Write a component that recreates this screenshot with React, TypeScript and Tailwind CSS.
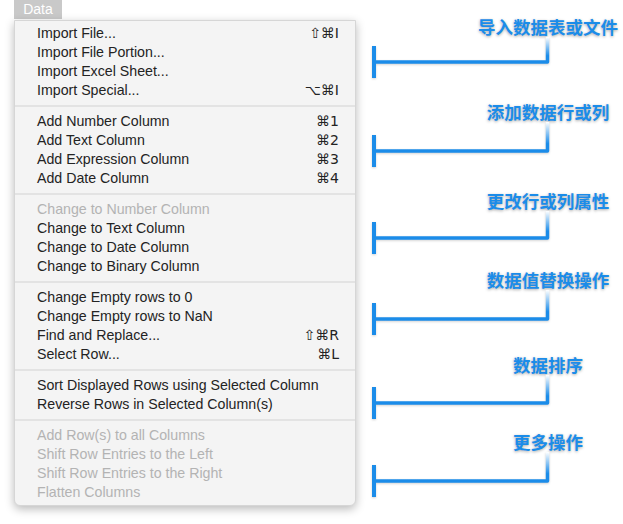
import React from "react";

type Item = { label: string; key?: string; off?: boolean };

const groups: Item[][] = [
  [
    { label: "Import File...", key: "⇧⌘I" },
    { label: "Import File Portion..." },
    { label: "Import Excel Sheet..." },
    { label: "Import Special...", key: "⌥⌘I" },
  ],
  [
    { label: "Add Number Column", key: "⌘1" },
    { label: "Add Text Column", key: "⌘2" },
    { label: "Add Expression Column", key: "⌘3" },
    { label: "Add Date Column", key: "⌘4" },
  ],
  [
    { label: "Change to Number Column", off: true },
    { label: "Change to Text Column" },
    { label: "Change to Date Column" },
    { label: "Change to Binary Column" },
  ],
  [
    { label: "Change Empty rows to 0" },
    { label: "Change Empty rows to NaN" },
    { label: "Find and Replace...", key: "⇧⌘R" },
    { label: "Select Row...", key: "⌘L" },
  ],
  [
    { label: "Sort Displayed Rows using Selected Column" },
    { label: "Reverse Rows in Selected Column(s)" },
  ],
  [
    { label: "Add Row(s) to all Columns", off: true },
    { label: "Shift Row Entries to the Left", off: true },
    { label: "Shift Row Entries to the Right", off: true },
    { label: "Flatten Columns", off: true },
  ],
];

// label text, block height, offset of the horizontal line inside the bracket svg
const notes = [
  { text: "导入数据表或文件", h: "h-[85px]", y: 25 },
  { text: "添加数据行或列", h: "h-[89px]", y: 29 },
  { text: "更改行或列属性", h: "h-[79px]", y: 27 },
  { text: "数据值替换操作", h: "h-[85px]", y: 29 },
  { text: "数据排序", h: "h-[77px]", y: 28 },
  { text: "更多操作", h: "h-[70px]", y: 29 },
];

const BLUE = "#1b8ce9";

function Bracket({ y, id }: { y: number; id: string }) {
  return (
    <svg width="182" height={y + 18} className="block drop-shadow-[0_1px_1px_rgba(0,0,0,0.18)]">
      <defs>
        <linearGradient id={id} gradientUnits="userSpaceOnUse" x1="0" y1="0" x2="0" y2={y}>
          <stop offset="0" stopColor="#ffffff" />
          <stop offset="0.75" stopColor={BLUE} />
        </linearGradient>
      </defs>
      <rect x="0" y={y - 16} width="4" height="32" fill={BLUE} />
      <path
        d={`M 2 ${y} H 175.5 V 0`}
        fill="none"
        stroke={`url(#${id})`}
        strokeWidth="3.5"
        strokeLinejoin="round"
      />
    </svg>
  );
}

export default function App() {
  return (
    <div className="w-[623px] h-[524px] bg-white flex font-['Liberation_Sans',Arial,sans-serif] overflow-hidden">
      {/* menu */}
      <div className="pl-[14px] flex flex-col">
        <div className="w-[48px] h-[19px] bg-[#c9c9c9] text-white text-[14px] leading-[19px] text-center">
          Data
        </div>
        <div className="mt-[1px] w-[342px] bg-[#f4f4f4] border border-[#d6d6d6] rounded-b-[6px] shadow-[0_3px_10px_rgba(0,0,0,0.28)] py-[3px]">
          {groups.map((g, gi) => (
            <div key={gi}>
              {gi > 0 && (
                <div className="h-[12px] flex items-center">
                  <div className="w-full h-[2px] bg-[#e3e3e3]" />
                </div>
              )}
              {g.map((it) => (
                <div
                  key={it.label}
                  className={`h-[19px] pl-[22px] pr-[16px] flex items-center justify-between text-[14.2px] leading-[19px] ${
                    it.off ? "text-[#b3b3b3]" : "text-[#232323]"
                  }`}
                >
                  <span>{it.label}</span>
                  {it.key && <span className="font-['DejaVu_Sans','Liberation_Sans',sans-serif] text-[14px]">{it.key}</span>}
                </div>
              ))}
            </div>
          ))}
        </div>
      </div>

      {/* annotations */}
      <div className="ml-[16px] pt-[17px] flex flex-col">
        {notes.map((n, i) => (
          <div key={n.text} className={`${n.h} flex flex-col`}>
            <div className="ml-[176px] w-0 h-[20px] flex justify-center">
              <span className="whitespace-nowrap text-[17.5px] leading-[20px] font-bold text-[#1b8ce9] font-['Noto_Sans_CJK_SC',sans-serif] [text-shadow:0_1px_3px_rgba(0,0,0,0.35)]">
                {n.text}
              </span>
            </div>
            <Bracket y={n.y} id={`g${i}`} />
          </div>
        ))}
      </div>
    </div>
  );
}
